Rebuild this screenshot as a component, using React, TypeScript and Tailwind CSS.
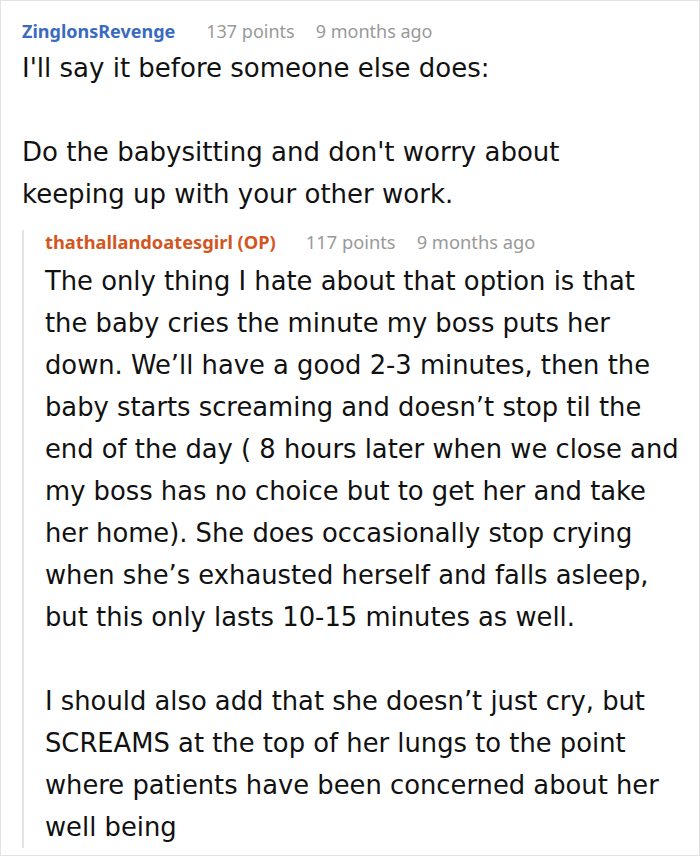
const body = '"DejaVu Sans", Verdana, sans-serif';

export default function App() {
  return (
    <div className="w-[700px] h-[856px] bg-white border border-[#e3e3e3] overflow-hidden" style={{ fontFamily: '"Noto Sans", sans-serif' }}>
      <div className="pl-[21px] pr-2 pt-[18px]">
        <div className="flex items-baseline text-[18px] leading-[24px]">
          <span className="font-bold text-[#3a6bbf]">ZinglonsRevenge</span>
          <span className="ml-[31px] text-[#999999]">137 points</span>
          <span className="ml-[21px] text-[#999999]">9 months ago</span>
        </div>
        <div className="text-[26px] leading-[42px] text-[#111111] mt-[4px]" style={{ fontFamily: body }}>
          <p>I'll say it before someone else does:</p>
          <p className="mt-[42px]">Do the babysitting and don't worry about<br />keeping up with your other work.</p>
        </div>
        <div className="mt-[15px] border-l-2 border-[#e3e3e3] pl-[21px]">
          <div className="flex items-baseline text-[18.3px] leading-[24px]">
            <span className="font-bold text-[#d3561f]">thathallandoatesgirl (OP)</span>
            <span className="ml-[30px] text-[#999999]">117 points</span>
            <span className="ml-[21px] text-[#999999]">9 months ago</span>
          </div>
          <div className="text-[25.8px] leading-[42px] text-[#111111] mt-[6px]" style={{ fontFamily: body }}>
            <p>
              The only thing I hate about that option is that<br />
              the baby cries the minute my boss puts her<br />
              down. We’ll have a good 2-3 minutes, then the<br />
              baby starts screaming and doesn’t stop til the<br />
              end of the day ( 8 hours later when we close and<br />
              my boss has no choice but to get her and take<br />
              her home). She does occasionally stop crying<br />
              when she’s exhausted herself and falls asleep,<br />
              but this only lasts 10-15 minutes as well.
            </p>
            <p className="mt-[42px]">
              I should also add that she doesn’t just cry, but<br />
              SCREAMS at the top of her lungs to the point<br />
              where patients have been concerned about her<br />
              well being
            </p>
          </div>
        </div>
      </div>
    </div>
  );
}
